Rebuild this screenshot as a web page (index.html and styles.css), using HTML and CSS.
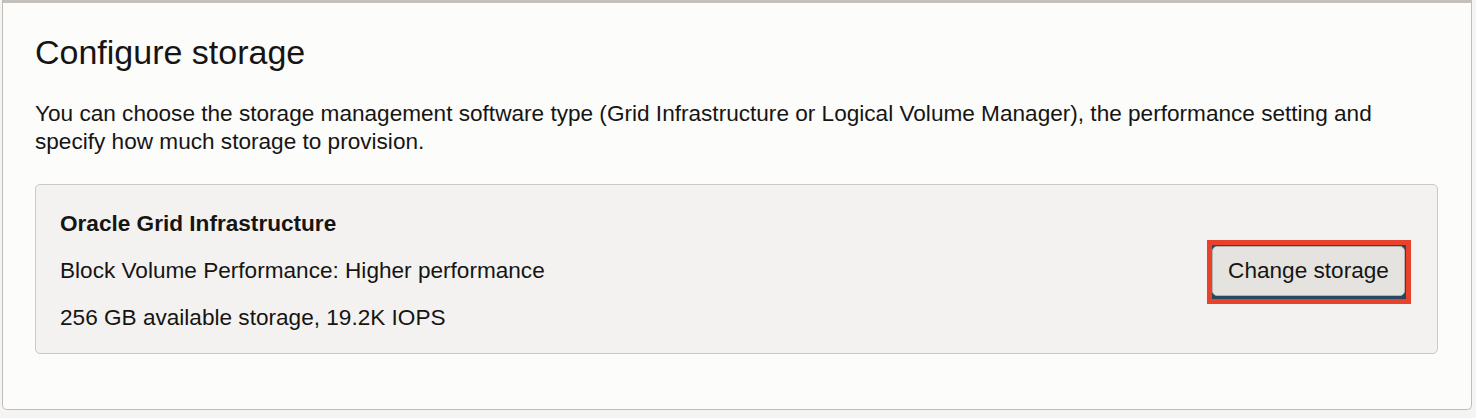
FILE: index.html
```html
<!DOCTYPE html>
<html lang="en">
<head>
<meta charset="utf-8">
<title>Configure storage</title>
<link rel="stylesheet" href="styles.css">
</head>
<body>
<section class="panel">
  <h1 class="title">Configure storage</h1>
  <p class="intro">You can choose the storage management software type (Grid Infrastructure or Logical Volume Manager), the performance setting and specify how much storage to provision.</p>
  <div class="card">
    <div class="card-info">
      <div class="card-title">Oracle Grid Infrastructure</div>
      <div class="card-line">Block Volume Performance: Higher performance</div>
      <div class="card-line">256 GB available storage, 19.2K IOPS</div>
    </div>
    <div class="highlight">
      <button class="btn" type="button">Change storage</button>
    </div>
  </div>
</section>
</body>
</html>
```

FILE: styles.css
```css
html, body {
  margin: 0;
  padding: 0;
}
body {
  background: #f5f4f2;
  font-family: "Liberation Sans", Arial, sans-serif;
  color: #161513;
  width: 1476px;
  height: 418px;
  overflow: hidden;
}
.panel {
  box-sizing: border-box;
  margin-left: 2px;
  width: 1470px;
  height: 410px;
  background: #fcfcfb;
  border: 1px solid #bfbcb9;
  border-top: 3px solid #c4c1bd;
  border-radius: 0 0 5px 5px;
  padding: 29px 33px 0 32px;
}
.title {
  margin: 0;
  font-size: 34px;
  line-height: 40px;
  font-weight: 400;
}
.intro {
  margin: 28px 0 0;
  font-size: 22.6px;
  line-height: 28px;
}
.card {
  margin-top: 28px;
  box-sizing: border-box;
  height: 170px;
  background: #f3f2f1;
  border: 1px solid #cbc8c5;
  border-radius: 5px;
  padding: 25px 26px 22px 24px;
  display: flex;
  align-items: center;
  justify-content: space-between;
}
.card-info {
  display: flex;
  flex-direction: column;
  gap: 19px;
  font-size: 22.6px;
  line-height: 28px;
  align-self: flex-start;
}
.card-title {
  font-weight: 700;
}
.highlight {
  border: 5px solid #e8412c;
  background: #24485e;
  padding: 1px 1px 3px 0;
  margin-top: 2px;
}
.btn {
  display: block;
  box-sizing: border-box;
  width: 193px;
  height: 50px;
  margin: 0;
  padding: 0;
  background: #e4e3df;
  border: 1px solid #b7b4b0;
  border-radius: 5px;
  font-family: "Liberation Sans", Arial, sans-serif;
  font-size: 22.6px;
  color: #161513;
}
```
